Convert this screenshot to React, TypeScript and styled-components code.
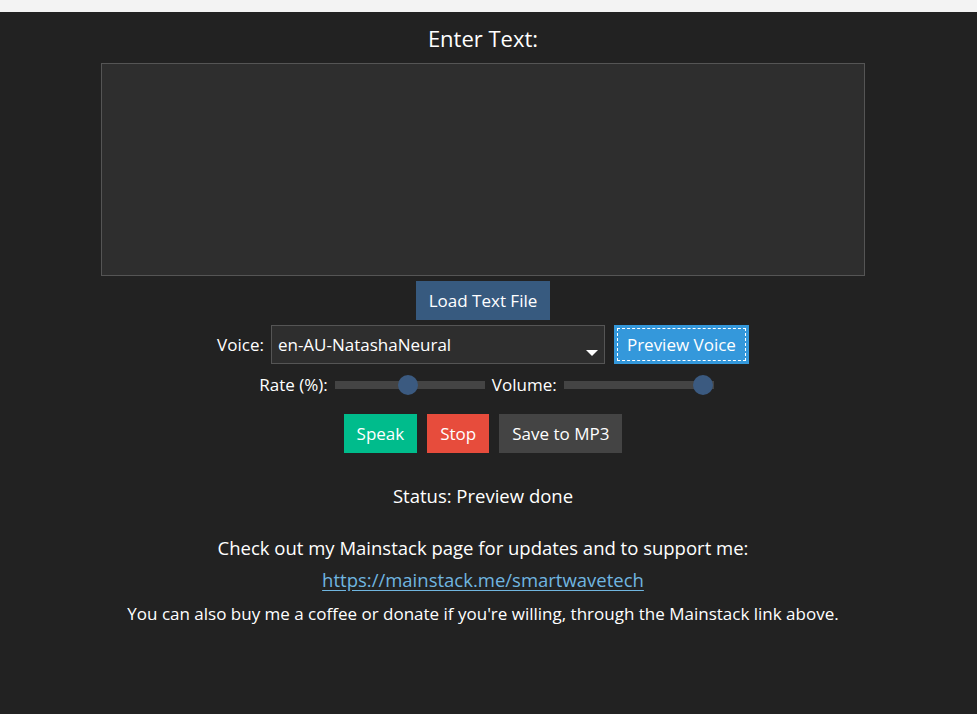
import React, { useState } from 'react';
import styled, { createGlobalStyle } from 'styled-components';

const GlobalStyle = createGlobalStyle`
  html, body {
    margin: 0;
    padding: 0;
    background: #222222;
    font-family: "Open Sans", "Noto Sans", sans-serif;
    color: #ffffff;
  }
`;

const TopStrip = styled.div`
  height: 12px;
  background: #f3f3f3;
`;

const Page = styled.div`
  min-height: 702px;
  background: #222222;
  display: flex;
  flex-direction: column;
  align-items: center;
  padding: 11px 11px 0 0;
  box-sizing: border-box;
`;

const Heading = styled.div`
  font-size: 22px;
  line-height: 30px;
  margin-bottom: 10px;
`;

const TextArea = styled.textarea`
  width: 764px;
  height: 213px;
  box-sizing: border-box;
  background: #2e2e2e;
  border: 1px solid #555555;
  color: #ffffff;
  resize: none;
  outline: none;
  font-family: inherit;
  font-size: 16px;
  padding: 6px 8px;
`;

const Row = styled.div<{ $gap?: number; $top?: number; $shift?: number }>`
  display: flex;
  align-items: center;
  gap: ${(p) => p.$gap ?? 10}px;
  margin-top: ${(p) => p.$top ?? 0}px;
  padding-left: ${(p) => p.$shift ?? 0}px;
`;

const Button = styled.button<{ $bg: string; $focused?: boolean }>`
  height: 39px;
  padding: 0 13px;
  border: none;
  background: ${(p) => p.$bg};
  color: #ffffff;
  font-family: inherit;
  font-size: 17px;
  cursor: pointer;
  outline: ${(p) => (p.$focused ? '1px dashed #ffffff' : 'none')};
  outline-offset: -4px;
`;

const Label = styled.span`
  font-size: 17px;
  color: #ffffff;
`;

const SelectBox = styled.div`
  position: relative;
  width: 334px;
  height: 39px;
  box-sizing: border-box;
  background: #2e2e2e;
  border: 1px solid #555555;
  display: flex;
  align-items: center;
  padding-left: 6px;
  font-size: 17px;
`;

const Arrow = styled.span`
  position: absolute;
  right: 6px;
  top: 24px;
  width: 0;
  height: 0;
  border-left: 6px solid transparent;
  border-right: 6px solid transparent;
  border-top: 6px solid #ffffff;
`;

const Track = styled.div`
  position: relative;
  width: 150px;
  height: 8px;
  background: #444444;
`;

const Thumb = styled.div`
  position: absolute;
  top: 50%;
  width: 20px;
  height: 20px;
  margin-left: -10px;
  margin-top: -10px;
  border-radius: 50%;
  background: #3b5a80;
`;

const Status = styled.div`
  margin-top: 30px;
  font-size: 18.5px;
  line-height: 26px;
`;

const Info = styled.div<{ $top: number; $small?: boolean }>`
  margin-top: ${(p) => p.$top}px;
  font-size: ${(p) => (p.$small ? 17 : 18.5)}px;
  line-height: 26px;
`;

const Link = styled.a`
  color: #70b6e0;
  text-decoration: underline;
  text-underline-offset: 3px;
`;

function Slider({ pos }: { pos: number }) {
  return (
    <Track>
      <Thumb style={{ left: `${pos}%` }} />
    </Track>
  );
}

export default function App() {
  const [text, setText] = useState('');
  return (
    <>
      <GlobalStyle />
      <TopStrip />
      <Page>
        <Heading>Enter Text:</Heading>
        <TextArea value={text} onChange={(e) => setText(e.target.value)} />
        <Row $top={5}>
          <Button $bg="#375a7f">Load Text File</Button>
        </Row>
        <Row $top={5} $gap={7}>
          <Label>Voice:</Label>
          <SelectBox>
            en-AU-NatashaNeural
            <Arrow />
          </SelectBox>
          <Button $bg="#3498db" $focused style={{ marginLeft: 2 }}>
            Preview Voice
          </Button>
        </Row>
        <Row $top={9} $gap={7} $shift={7}>
          <Label>Rate (%):</Label>
          <Slider pos={49} />
          <Label>Volume:</Label>
          <Slider pos={93} />
        </Row>
        <Row $top={18} $gap={10}>
          <Button $bg="#00bc8c">Speak</Button>
          <Button $bg="#e74c3c">Stop</Button>
          <Button $bg="#444444">Save to MP3</Button>
        </Row>
        <Status>Status: Preview done</Status>
        <Info $top={26}>Check out my Mainstack page for updates and to support me:</Info>
        <Info $top={6}>
          <Link href="#">https://mainstack.me/smartwavetech</Link>
        </Info>
        <Info $top={8} $small>
          You can also buy me a coffee or donate if you're willing, through the Mainstack link above.
        </Info>
      </Page>
    </>
  );
}
